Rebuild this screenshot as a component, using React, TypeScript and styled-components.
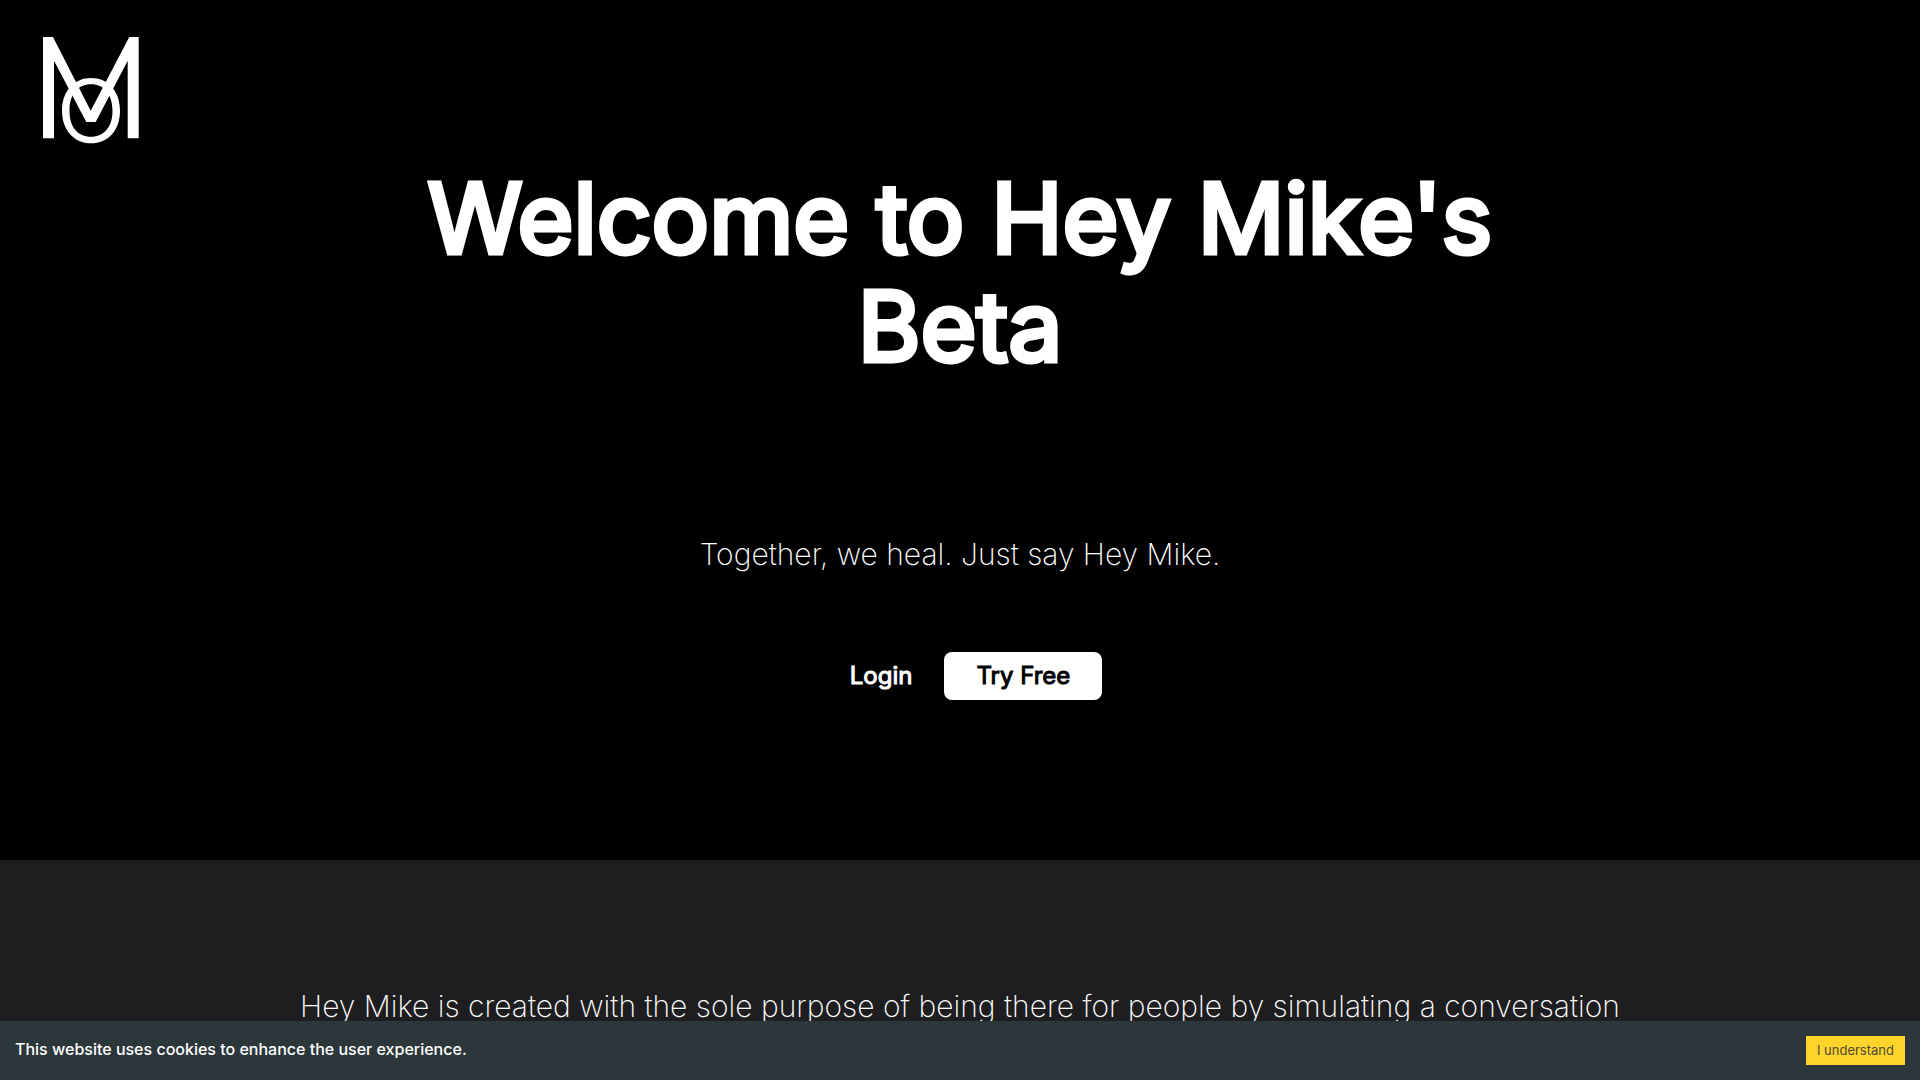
import React from 'react';
import styled, { createGlobalStyle } from 'styled-components';

const Global = createGlobalStyle`
  *, *::before, *::after { box-sizing: border-box; }
  body {
    margin: 0;
    background: #000;
    color: #fff;
    font-family: Inter, "Liberation Sans", sans-serif;
  }
`;

const Page = styled.div`
  height: 100vh;
  overflow: hidden;
`;

const Hero = styled.header`
  display: flex;
  flex-direction: column;
  align-items: center;
  background: #000;
  padding-bottom: 160px;
`;

const HomeLink = styled.a`
  align-self: flex-start;
  margin: 36px 0 0 42px;
  line-height: 0;
`;

const Title = styled.h1`
  max-width: 1152px;
  margin: 20px 0 0;
  font-size: 96px;
  line-height: 108px;
  font-weight: 400;
  -webkit-text-stroke: 5px #fff;
  text-align: center;
`;

const Tagline = styled.p`
  margin: 144px 0 0;
  font-size: 30px;
  line-height: 60px;
  font-weight: 200;
`;

const Actions = styled.nav`
  display: flex;
  align-items: center;
  margin-top: 68px;
`;

const Action = styled.a<{ $filled?: boolean }>`
  display: block;
  padding: 0 32px;
  border-radius: 8px;
  font-size: 24px;
  line-height: 48px;
  font-weight: 400;
  -webkit-text-stroke: 1px currentColor;
  text-decoration: none;
  color: ${(p) => (p.$filled ? '#000' : '#fff')};
  background: ${(p) => (p.$filled ? '#fff' : 'transparent')};
`;

const About = styled.main`
  background: #1e1e20;
  padding: 116px 15% 200px;
`;

const AboutText = styled.p`
  margin: 0;
  font-size: 30px;
  line-height: 60px;
  font-weight: 200;
  text-align: center;
`;

const CookieBar = styled.aside`
  position: fixed;
  inset: auto 0 0;
  display: flex;
  align-items: flex-start;
  justify-content: space-between;
  padding: 15px;
  background: #2c373b;
  font-size: 16px;
  line-height: 26px;
  font-weight: 500;
`;

const CookieButton = styled.button`
  border: 0;
  padding: 5px 11px;
  background: #ffd42d;
  color: #4e4a33;
  font: 400 13px/19px Inter, "Liberation Sans", sans-serif;
`;

const Logo = () => (
  <svg width="98" height="108" viewBox="0 0 98 108" fill="#fff" role="img" aria-label="Hey Mike">
    <path d="M1 1H11L48.7 74.7L87.3 1H96.7V102.3H85.7V24.7L53.7 86H44.3L12 24.7V102.3H1Z" />
    <path
      fillRule="evenodd"
      d="M49 42C66 42 78 55 78 74.7S66 107.3 49 107.3S20 94 20 74.7S32 42 49 42ZM49 48.3C36 48.3 27.5 58 27.5 74.7S36 100.7 49 100.7S70.5 91 70.5 74.7S62 48.3 49 48.3Z"
    />
  </svg>
);

export default function App() {
  return (
    <Page>
      <Global />
      <Hero>
        <HomeLink href="#"><Logo /></HomeLink>
        <Title>Welcome to Hey Mike's Beta</Title>
        <Tagline>Together, we heal. Just say Hey Mike.</Tagline>
        <Actions>
          <Action href="#login">Login</Action>
          <Action href="#try" $filled>Try Free</Action>
        </Actions>
      </Hero>
      <About>
        <AboutText>Hey Mike is created with the sole purpose of being there for people by simulating a conversation</AboutText>
      </About>
      <CookieBar>
        <span>This website uses cookies to enhance the user experience.</span>
        <CookieButton type="button">I understand</CookieButton>
      </CookieBar>
    </Page>
  );
}
